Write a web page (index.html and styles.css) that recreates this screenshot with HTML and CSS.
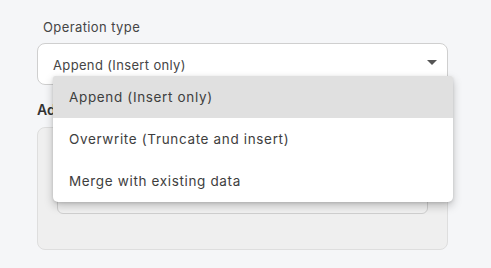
FILE: index.html
```html
<!DOCTYPE html>
<html>
<head>
<meta charset="utf-8">
<link rel="stylesheet" href="styles.css">
</head>
<body>
<div class="form">
  <div class="field">
    <div class="label">Operation type</div>
    <div class="select">
      <span class="value">Append (Insert only)</span>
      <svg class="arrow" width="10" height="5" viewBox="0 0 10 5"><path d="M0 0 L10 0 L5 5 Z" fill="#555"/></svg>
    </div>
  </div>
  <div class="section-label">Additional settings</div>
  <div class="panel">
    <div class="inner"></div>
  </div>
  <ul class="menu">
    <li class="item active">Append (Insert only)</li>
    <li class="item">Overwrite (Truncate and insert)</li>
    <li class="item">Merge with existing data</li>
  </ul>
</div>
</body>
</html>
```
FILE: styles.css
```css
html, body {
  margin: 0;
  padding: 0;
  background: #f5f6f8;
  font-family: Inter, "Liberation Sans", sans-serif;
}
.form {
  position: relative;
  width: 411px;
  padding: 18px 0 0 37px;
}
.label {
  font-size: 13px;
  color: #454545;
  padding-left: 6px;
  height: 18px;
  line-height: 18px;
  letter-spacing: 0.4px;
}
.field {
  display: flex;
  flex-direction: column;
  gap: 7px;
}
.select {
  box-sizing: border-box;
  height: 42px;
  background: #fff;
  border: 1px solid #cfcfcf;
  border-radius: 8px;
  display: flex;
  align-items: center;
  justify-content: space-between;
  padding: 0 10px 0 15px;
}
.value {
  font-size: 13px;
  color: #454545;
  letter-spacing: 0.35px;
  margin-top: 2px;
}
.arrow {
  margin-top: -3px;
}
.section-label {
  font-size: 14px;
  font-weight: 600;
  color: #333;
  margin-top: 16px;
  height: 18px;
  line-height: 18px;
}
.panel {
  box-sizing: border-box;
  margin-top: 8px;
  height: 123px;
  background: #efefef;
  border: 1px solid #dedede;
  border-radius: 8px;
  padding: 19px 19px 0 19px;
}
.inner {
  box-sizing: border-box;
  height: 67px;
  border: 1px solid #cfcfcf;
  border-radius: 6px;
  background: #f2f2f2;
}
.menu {
  position: absolute;
  left: 53px;
  top: 76px;
  width: 400px;
  margin: 0;
  padding: 0;
  list-style: none;
  background: #fff;
  border-radius: 2px 2px 5px 5px;
  box-shadow: 0 4px 10px rgba(0,0,0,0.22), 0 1px 3px rgba(0,0,0,0.12);
  overflow: hidden;
}
.item {
  height: 42px;
  line-height: 42px;
  padding-left: 16px;
  font-size: 13.5px;
  letter-spacing: 0.65px;
  color: #3e3e3e;
}
.item.active {
  background: #e0e0e0;
}
```
